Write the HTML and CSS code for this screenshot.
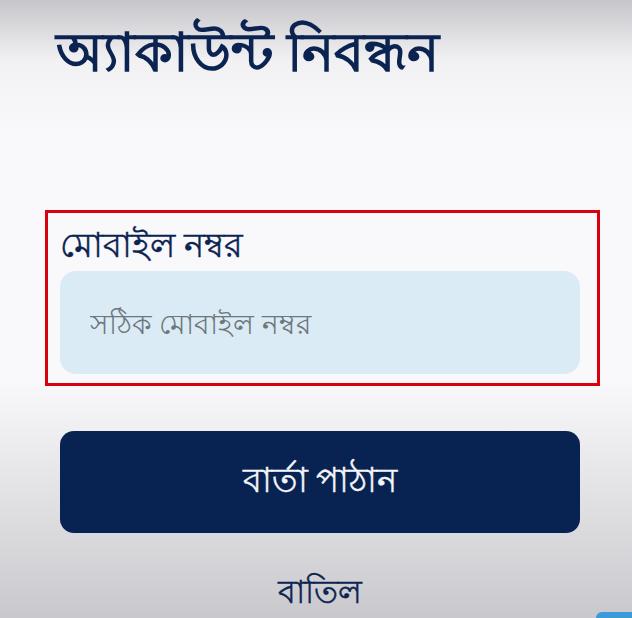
FILE: index.html
```html
<!DOCTYPE html>
<html lang="bn">
<head>
  <meta charset="UTF-8">
  <meta name="viewport" content="width=device-width, initial-scale=1.0">
  <title>অ্যাকাউন্ট নিবন্ধন</title>
  <link rel="stylesheet" href="styles.css">
</head>
<body>
  <div class="screen">
    <h1 class="title">অ্যাকাউন্ট নিবন্ধন</h1>

    <!-- phone number field -->
    <div class="field-box">
      <label class="field-label" for="phone">মোবাইল নম্বর</label>
      <input class="field-input" type="tel" id="phone" placeholder="সঠিক মোবাইল নম্বর">
    </div>

    <button class="send-btn">বার্তা পাঠান</button>
    <button class="cancel-btn">বাতিল</button>
  </div>
  <div class="corner-mark"></div>
</body>
</html>
```

FILE: styles.css
```css
html, body {
  margin: 0;
  height: 100%;
}

body {
  font-family: "Noto Sans", sans-serif;
  color: #0b2350;
  background: linear-gradient(to bottom, #c6c5c9 0px, #f1f0f3 60px, #f9f8fb 130px, #f9f8fb 380px, #e9e8eb 460px, #c9c8cc 618px);
  overflow: hidden;
  position: relative;
}

.screen {
  display: flex;
  flex-direction: column;
  padding: 14px 32px 0 45px;
}

.title {
  margin: 0 0 0 11px;
  font-size: 54px;
  font-weight: bold;
  line-height: 72px;
}

.field-box {
  margin-top: 124px;
  border: 3px solid #d9000f;
  padding: 10px 17px 9px 12px;
  display: flex;
  flex-direction: column;
  gap: 6px;
}

.field-label {
  font-size: 34px;
  line-height: 42px;
  -webkit-text-stroke: 0.4px #0b2350;
}

.field-input {
  height: 103px;
  box-sizing: border-box;
  border: none;
  border-radius: 16px;
  background: #dbebf5;
  padding: 0 30px;
  font-family: inherit;
  font-size: 28px;
  color: #333;
  outline: none;
}

.field-input::placeholder {
  color: #6d777c;
}

.send-btn {
  margin: 45px 0 0 15px;
  width: 520px;
  height: 102px;
  border: none;
  border-radius: 14px;
  background: #082352;
  color: #f4f6f9;
  font-family: inherit;
  font-size: 34px;
  -webkit-text-stroke: 0.4px #f4f6f9;
}

.cancel-btn {
  margin: 32px 0 0 15px;
  width: 520px;
  border: none;
  background: none;
  color: #0b2350;
  font-family: inherit;
  font-size: 32px;
  line-height: 50px;
  -webkit-text-stroke: 0.4px #0b2350;
}

.corner-mark {
  position: absolute;
  right: 0;
  bottom: 0;
  width: 36px;
  height: 6px;
  border-radius: 6px 0 0 0;
  background: #3b9ad8;
}
```
